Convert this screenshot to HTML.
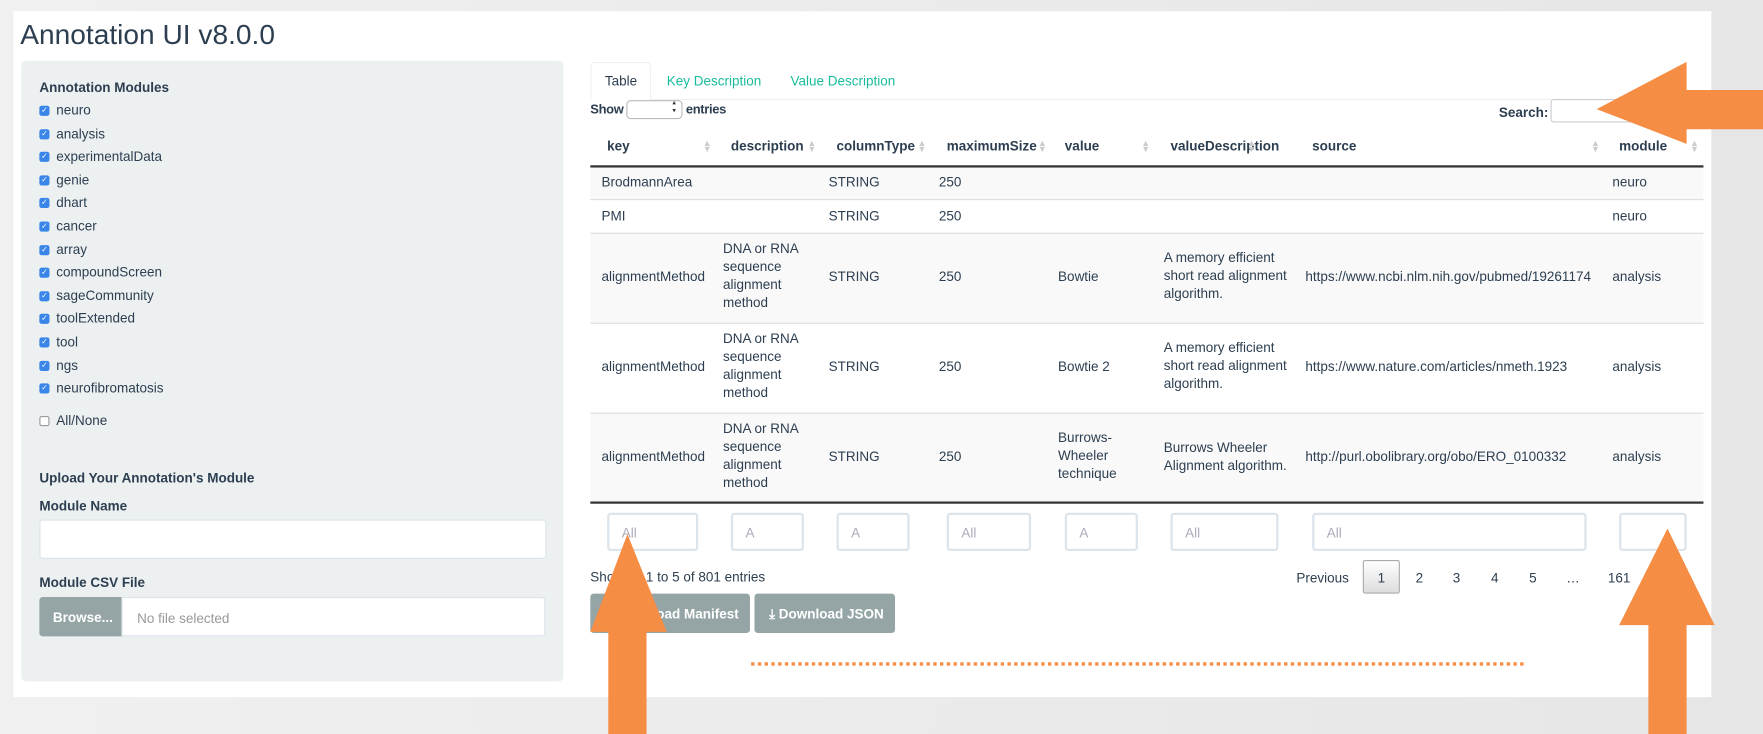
<!DOCTYPE html>
<html><head><meta charset="utf-8"><style>
*{box-sizing:border-box;margin:0;padding:0}
html,body{width:1763px;height:734px;overflow:hidden;background:#ececec;font-family:"Liberation Sans",sans-serif;color:#2c3e50}
#w{position:absolute;left:0;top:0;width:1568px;height:653px;transform:scale(1.1244);transform-origin:0 0;background:linear-gradient(90deg,#f0f0f0,#e6e6e6)}
.a{position:absolute;white-space:nowrap}
.t{font-size:12px}
.b{font-weight:bold}
.cb{position:absolute;width:9px;height:9px;border-radius:2px;background:#3a86e8;color:#fff;font-size:7px;line-height:9px;text-align:center}
.cbe{background:#fff;border:1px solid #999}
.inp{position:absolute;background:#fff;border:1px solid #dce4ec;border-radius:3px}
.fi{position:absolute;background:#fff;border:2px solid #dce4ec;border-radius:3px;font-size:12px;color:#aab;padding:9px 0 0 11px;height:34px;top:456px}
.srt{position:absolute;font-size:8px;color:#ccc;line-height:5px}
.row{position:absolute;left:525px;width:990px;border-top:1px solid #ddd}
.c{position:absolute;font-size:12px;line-height:16px}
</style></head><body><div id="w">
<div class="a" style="left:12px;top:10px;width:1510px;height:610px;background:#fff"></div>
<div class="a" style="left:18px;top:17px;font-size:25px">Annotation UI v8.0.0</div>
<div class="a" style="left:19px;top:54px;width:482px;height:552px;background:#ecf0f1;border-radius:4px"></div>
<div class="a t b" style="left:35px;top:71px">Annotation Modules</div>
<div id="cbs"></div>
<div class="cb cbe" style="left:35px;top:370px"></div><div class="a t" style="left:50px;top:367px">All/None</div>
<div class="a t b" style="left:35px;top:418px">Upload Your Annotation's Module</div>
<div class="a t b" style="left:35px;top:443px">Module Name</div>
<div class="inp" style="left:35px;top:462px;width:451px;height:35px"></div>
<div class="a t b" style="left:35px;top:511px">Module CSV File</div>
<div class="a" style="left:35px;top:531px;width:74px;height:35px;background:#95a5a6;border-radius:3px 0 0 3px;color:#fff;font-size:12px;font-weight:bold;padding:11px 0 0 12px">Browse...</div>
<div class="inp" style="left:108px;top:531px;width:377px;height:35px;border-radius:0 3px 3px 0;font-size:12px;color:#999;padding:11px 0 0 13px">No file selected</div>

<div class="a" style="left:525px;top:55px;width:54px;height:34px;border:1px solid #ecf0f1;border-bottom:none;border-radius:4px 4px 0 0"></div>
<div class="a" style="left:579px;top:88px;width:936px;border-top:1px solid #ecf0f1"></div>
<div class="a t" style="left:538px;top:65px">Table</div>
<div class="a t" style="left:593px;top:65px;color:#18bc9c">Key Description</div>
<div class="a t" style="left:703px;top:65px;color:#18bc9c">Value Description</div>
<div class="a b" style="left:525px;top:92px;font-size:11.5px;letter-spacing:-0.3px">Show</div>
<div class="inp" style="left:557px;top:89px;width:50px;height:17px;border-radius:4px;border-color:#bbb"></div>
<div class="a" style="left:598px;top:89px;font-size:6px;line-height:7px;color:#333">▴<br>▾</div>
<div class="a b" style="left:610px;top:92px;font-size:11.5px;letter-spacing:-0.3px">entries</div>
<div class="a t b" style="left:1333px;top:93px">Search:</div>
<div class="inp" style="left:1379px;top:88px;width:136px;height:21px;border-color:#ccc"></div>

<div class="a t b" style="left:540px;top:123px">key</div>
<div class="a t b" style="left:650px;top:123px">description</div>
<div class="a t b" style="left:744px;top:123px">columnType</div>
<div class="a t b" style="left:842px;top:123px">maximumSize</div>
<div class="a t b" style="left:947px;top:123px">value</div>
<div class="a t b" style="left:1041px;top:123px">valueDescription</div>
<div class="a t b" style="left:1167px;top:123px">source</div>
<div class="a t b" style="left:1440px;top:123px">module</div>
<div class="srt" style="left:625px;top:125px">▲<br>▼</div>
<div class="srt" style="left:718px;top:125px">▲<br>▼</div>
<div class="srt" style="left:816px;top:125px">▲<br>▼</div>
<div class="srt" style="left:923px;top:125px">▲<br>▼</div>
<div class="srt" style="left:1015px;top:125px">▲<br>▼</div>
<div class="srt" style="left:1109px;top:125px">▲<br>▼</div>
<div class="srt" style="left:1415px;top:125px">▲<br>▼</div>
<div class="srt" style="left:1503px;top:125px">▲<br>▼</div>

<div class="row" style="top:147px;height:30px;background:#f9f9f9;border-top:2px solid #333"></div>
<div class="row" style="top:177px;height:30px"></div>
<div class="row" style="top:207px;height:80px;background:#f9f9f9"></div>
<div class="row" style="top:287px;height:80px"></div>
<div class="row" style="top:367px;height:80px;background:#f9f9f9"></div>
<div class="row" style="top:446px;height:0;border-top:2px solid #333"></div>

<div class="c" style="left:535px;top:154px">BrodmannArea</div><div class="c" style="left:737px;top:154px">STRING</div><div class="c" style="left:835px;top:154px">250</div><div class="c" style="left:1434px;top:154px">neuro</div>
<div class="c" style="left:535px;top:184px">PMI</div><div class="c" style="left:737px;top:184px">STRING</div><div class="c" style="left:835px;top:184px">250</div><div class="c" style="left:1434px;top:184px">neuro</div>

<div class="c" style="left:535px;top:238px">alignmentMethod</div>
<div class="c" style="left:643px;top:213px">DNA or RNA<br>sequence<br>alignment<br>method</div>
<div class="c" style="left:737px;top:238px">STRING</div><div class="c" style="left:835px;top:238px">250</div>
<div class="c" style="left:941px;top:238px">Bowtie</div>
<div class="c" style="left:1035px;top:221px">A memory efficient<br>short read alignment<br>algorithm.</div>
<div class="c" style="left:1161px;top:238px">https://www.ncbi.nlm.nih.gov/pubmed/19261174</div>
<div class="c" style="left:1434px;top:238px">analysis</div>

<div class="c" style="left:535px;top:318px">alignmentMethod</div>
<div class="c" style="left:643px;top:293px">DNA or RNA<br>sequence<br>alignment<br>method</div>
<div class="c" style="left:737px;top:318px">STRING</div><div class="c" style="left:835px;top:318px">250</div>
<div class="c" style="left:941px;top:318px">Bowtie 2</div>
<div class="c" style="left:1035px;top:301px">A memory efficient<br>short read alignment<br>algorithm.</div>
<div class="c" style="left:1161px;top:318px">https://www.nature.com/articles/nmeth.1923</div>
<div class="c" style="left:1434px;top:318px">analysis</div>

<div class="c" style="left:535px;top:398px">alignmentMethod</div>
<div class="c" style="left:643px;top:373px">DNA or RNA<br>sequence<br>alignment<br>method</div>
<div class="c" style="left:737px;top:398px">STRING</div><div class="c" style="left:835px;top:398px">250</div>
<div class="c" style="left:941px;top:381px">Burrows-<br>Wheeler<br>technique</div>
<div class="c" style="left:1035px;top:390px">Burrows Wheeler<br>Alignment algorithm.</div>
<div class="c" style="left:1161px;top:398px">http://purl.obolibrary.org/obo/ERO_0100332</div>
<div class="c" style="left:1434px;top:398px">analysis</div>

<div class="fi" style="left:540px;width:81px">All</div>
<div class="fi" style="left:650px;width:65px">A</div>
<div class="fi" style="left:744px;width:65px">A</div>
<div class="fi" style="left:842px;width:75px">All</div>
<div class="fi" style="left:947px;width:65px">A</div>
<div class="fi" style="left:1041px;width:96px">All</div>
<div class="fi" style="left:1167px;width:244px">All</div>
<div class="fi" style="left:1440px;width:60px"></div>

<div class="a t" style="left:525px;top:506px">Showing 1 to 5 of 801 entries</div>
<div class="a t" style="left:1153px;top:507px">Previous</div>
<div class="a" style="left:1212px;top:498px;width:33px;height:30px;border:1px solid #aaa;border-radius:2px;background:linear-gradient(#fff,#ddd);font-size:12px;text-align:center;padding-top:8px">1</div>
<div class="a t" style="left:1259px;top:507px">2</div>
<div class="a t" style="left:1292px;top:507px">3</div>
<div class="a t" style="left:1326px;top:507px">4</div>
<div class="a t" style="left:1360px;top:507px">5</div>
<div class="a t" style="left:1393px;top:507px">…</div>
<div class="a t" style="left:1430px;top:507px">161</div>
<div class="a t" style="left:1470px;top:507px">Next</div>
<div class="a" style="left:525px;top:528px;width:142px;height:35px;background:#95a5a6;border-radius:3px;color:#fff;font-size:12px;font-weight:bold;padding:11px 0 0 14px">⤓ Download Manifest</div>
<div class="a" style="left:671px;top:528px;width:125px;height:35px;background:#95a5a6;border-radius:3px;color:#fff;font-size:12px;font-weight:bold;padding:11px 0 0 13px">⤓ Download JSON</div>
<div class="a" style="left:668px;top:589px;width:687px;border-top:3px dotted #f58d45"></div>

<svg class="a" style="left:0;top:0" width="1568" height="653">
<g fill="#f58d45">
<polygon points="1420,97 1500,55 1500,80 1568,80 1568,115 1500,115 1500,128"/>
<polygon points="558,475 593,562 575,562 575,653 541,653 541,562 525,562"/>
<polygon points="1483,470 1525,556 1500,556 1500,653 1466,653 1466,556 1440,556"/>
</g></svg>
</div>
<script>
var n=["neuro","analysis","experimentalData","genie","dhart","cancer","array","compoundScreen","sageCommunity","toolExtended","tool","ngs","neurofibromatosis"],h="";
n.forEach(function(s,i){var y=92+i*20.6;h+='<div class="cb" style="left:35px;top:'+(y+2)+'px">✓</div><div class="a t" style="left:50px;top:'+(y-1)+'px">'+s+'</div>';});
document.getElementById("cbs").innerHTML=h;
</script>
</body></html>
